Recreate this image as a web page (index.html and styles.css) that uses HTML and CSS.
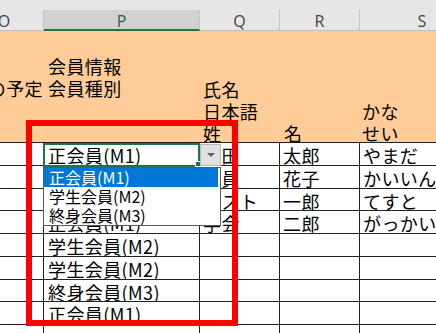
FILE: index.html
```html
<!DOCTYPE html>
<html lang="ja">
<head>
    <meta charset="UTF-8">
    <title>会員種別の入力規則</title>
    <link rel="stylesheet" href="styles.css">
</head>
<body>
    <div class="screen">
        <div class="sheet">
            <div class="row colbar">
                <div class="letter">O</div>
                <div class="letter selected">P</div>
                <div class="letter">Q</div>
                <div class="letter">R</div>
                <div class="letter">S</div>
            </div>

            <div class="row head">
                <div class="hcell h-o"><span>入会の予定</span></div>
                <div class="hcell h-p">会員情報<br>会員種別</div>
                <div class="hcell h-q">氏名<br>日本語<br>姓</div>
                <div class="hcell h-r">名</div>
                <div class="hcell h-s">かな<br>せい</div>
            </div>

            <div class="row data">
                <div class="cell"></div>
                <div class="cell p">正会員(M1)</div>
                <div class="cell">山田</div>
                <div class="cell">太郎</div>
                <div class="cell">やまだ</div>
            </div>
            <div class="row data">
                <div class="cell"></div>
                <div class="cell p">学生会員(M2)</div>
                <div class="cell">会員</div>
                <div class="cell">花子</div>
                <div class="cell">かいいん</div>
            </div>
            <div class="row data">
                <div class="cell"></div>
                <div class="cell p">終身会員(M3)</div>
                <div class="cell">テスト</div>
                <div class="cell">一郎</div>
                <div class="cell">てすと</div>
            </div>
            <div class="row data">
                <div class="cell"></div>
                <div class="cell p">正会員(M1)</div>
                <div class="cell">学会</div>
                <div class="cell">二郎</div>
                <div class="cell">がっかい</div>
            </div>
            <div class="row data">
                <div class="cell"></div>
                <div class="cell p">学生会員(M2)</div>
                <div class="cell"></div>
                <div class="cell"></div>
                <div class="cell"></div>
            </div>
            <div class="row data">
                <div class="cell"></div>
                <div class="cell p">学生会員(M2)</div>
                <div class="cell"></div>
                <div class="cell"></div>
                <div class="cell"></div>
            </div>
            <div class="row data">
                <div class="cell"></div>
                <div class="cell p">終身会員(M3)</div>
                <div class="cell"></div>
                <div class="cell"></div>
                <div class="cell"></div>
            </div>
            <div class="row data">
                <div class="cell"></div>
                <div class="cell p">正会員(M1)</div>
                <div class="cell"></div>
                <div class="cell"></div>
                <div class="cell"></div>
            </div>
            <div class="row data">
                <div class="cell"></div>
                <div class="cell p"></div>
                <div class="cell"></div>
                <div class="cell"></div>
                <div class="cell"></div>
            </div>
        </div>

        <!-- active cell + validation dropdown -->
        <div class="active-cell"></div>
        <div class="fill-handle"></div>
        <div class="dd-button"><span class="arrow"></span></div>
        <ul class="dd-list">
            <li class="on">正会員(M1)</li>
            <li>学生会員(M2)</li>
            <li>終身会員(M3)</li>
        </ul>

        <div class="red-frame"></div>
    </div>
</body>
</html>
```

FILE: styles.css
```css
body {
    margin: 0;
    background-color: #fff;
    font-family: "Noto Sans CJK JP", sans-serif;
    color: #000;
}

.screen {
    position: relative;
    width: 436px;
    height: 333px;
    overflow: hidden;
}

.sheet {
    margin-left: -35px;
    width: 520px;
}

.row {
    display: grid;
    grid-template-columns: 79px 156px 80px 80px 125px;
}

/* column letters */
.colbar {
    padding-top: 10px;
    background-color: #e6e6e6;
}

.letter {
    height: 21px;
    padding-top: 2px;
    box-sizing: border-box;
    border-right: 1px solid #c6c6c6;
    border-bottom: 1px solid #bfbfbf;
    font-family: "Open Sans", sans-serif;
    font-size: 16px;
    line-height: 19px;
    text-align: center;
    color: #444;
}

.letter.selected {
    background-color: #d2d2d2;
    border-bottom: 2px solid #217346;
    color: #2f5f43;
}

/* orange header row */
.head {
    background-color: #ffcc99;
}

.hcell {
    height: 112px;
    box-sizing: border-box;
    border-bottom: 1px solid #222;
    padding-left: 3px;
    font-size: 18px;
    line-height: 22px;
    letter-spacing: 0.4px;
    white-space: nowrap;
    overflow: hidden;
}

.h-o {
    display: flex;
    justify-content: flex-end;
    padding: 46px 1px 0 0;
}

.h-p {
    padding-top: 24px;
    padding-left: 4px;
}

.h-q {
    padding-top: 47px;
}

.h-r {
    padding-top: 91px;
    padding-left: 4px;
}

.h-s {
    padding-top: 69px;
    padding-left: 2px;
}

/* data rows */
.data .cell {
    height: 22.75px;
    box-sizing: border-box;
    border-right: 1px solid #222;
    border-bottom: 1px solid #222;
    padding: 1px 0 0 3px;
    font-size: 18px;
    line-height: 22px;
    letter-spacing: 0.4px;
    white-space: nowrap;
    overflow: hidden;
}

.data .cell.p {
    padding-left: 4px;
}

.data .cell:last-child {
    border-right: none;
}

/* overlays */
.active-cell {
    position: absolute;
    left: 43px;
    top: 143px;
    width: 157px;
    height: 24px;
    box-sizing: border-box;
    border: 2px solid #217346;
}

.fill-handle {
    position: absolute;
    left: 195px;
    top: 161px;
    width: 4px;
    height: 4px;
    background-color: #217346;
    border: 1px solid #fff;
}

.dd-button {
    position: absolute;
    left: 200px;
    top: 144px;
    width: 21px;
    height: 22px;
    box-sizing: border-box;
    background-color: #e1e1e1;
    border: 1px solid #b9b9b9;
    display: flex;
    align-items: center;
    justify-content: center;
}

.arrow {
    width: 0;
    height: 0;
    border-left: 4px solid transparent;
    border-right: 4px solid transparent;
    border-top: 4px solid #5f5f5f;
}

.dd-list {
    position: absolute;
    left: 43px;
    top: 167px;
    width: 178px;
    margin: 0;
    padding: 0 2px 0 0;
    box-sizing: border-box;
    list-style: none;
    background-color: #fff;
    border: 1px solid #5a5a5a;
    font-size: 16px;
    line-height: 19px;
}

.dd-list li {
    padding-left: 5px;
    white-space: nowrap;
}

.dd-list li.on {
    background-color: #0078d7;
    color: #fff;
}

.red-frame {
    position: absolute;
    left: 26px;
    top: 120px;
    width: 212px;
    height: 206px;
    box-sizing: border-box;
    border: 6px solid #ff0000;
}
```
